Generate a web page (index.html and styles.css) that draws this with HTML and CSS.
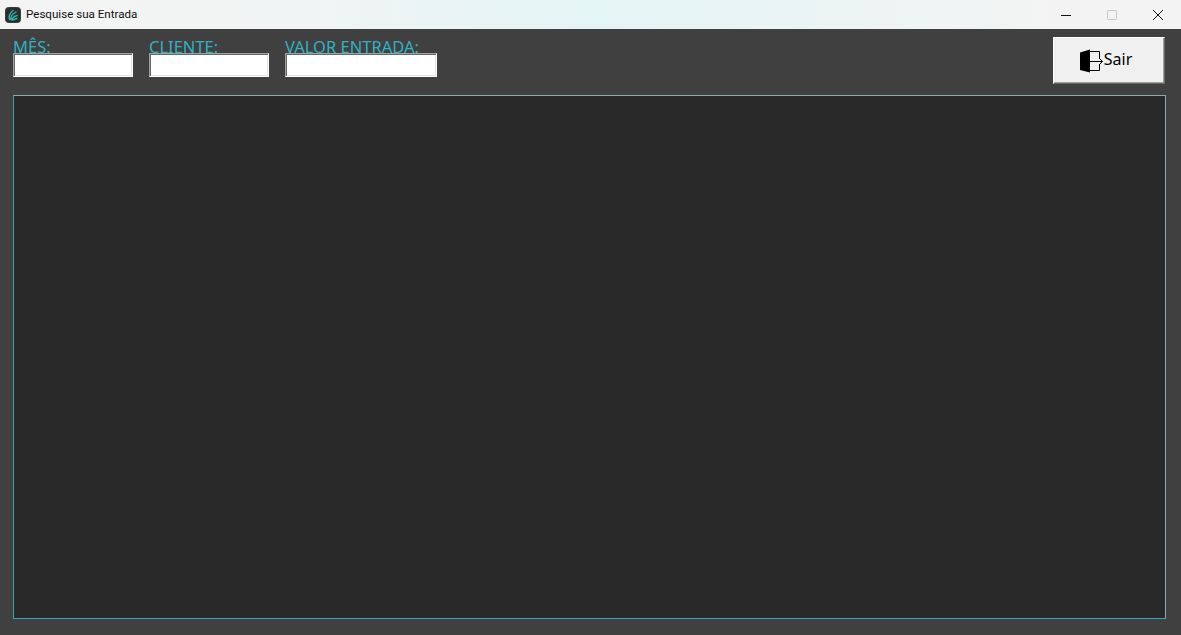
FILE: index.html
```html
<!DOCTYPE html>
<html lang="pt-BR">
<head>
<meta charset="utf-8">
<title>Pesquise sua Entrada</title>
<link rel="stylesheet" href="styles.css">
</head>
<body>
<div class="window">
  <header class="titlebar">
    <div class="title-left">
      <svg class="app-icon" width="16" height="16" viewBox="0 0 16 16">
        <rect x="0.5" y="0.5" width="15" height="15" rx="3" fill="#26302f" stroke="#3a3a3a"/>
        <path d="M4.500 12.500C3.500 9.500 5 6 8 3.500M5.500 12.500C5.500 10 7.500 7 11 5M6.500 12.500C7.500 11 9.500 9 12 8.500M7.500 13C9 12.500 10.500 12 12 11.500" fill="none" stroke="#2fb5b0" stroke-width="1.4" stroke-linecap="round"/>
      </svg>
      <span class="title-text">Pesquise sua Entrada</span>
    </div>
    <div class="win-controls">
      <span class="win-btn"><svg width="12" height="12" viewBox="0 0 12 12"><path d="M1 6.500h10" stroke="#111" stroke-width="1"/></svg></span>
      <span class="win-btn"><svg width="12" height="12" viewBox="0 0 12 12"><rect x="1.500" y="1.500" width="9" height="9" rx="1" fill="none" stroke="#c4c4c4"/></svg></span>
      <span class="win-btn"><svg width="12" height="12" viewBox="0 0 12 12"><path d="M1 1l10 10M11 1L1 11" stroke="#111" stroke-width="1"/></svg></span>
    </div>
  </header>
  <main class="content">
    <div class="toolbar">
      <div class="fields">
        <label class="field field-sm"><span class="field-label">MÊS:</span><input class="field-input" type="text"></label>
        <label class="field field-sm"><span class="field-label">CLIENTE:</span><input class="field-input" type="text"></label>
        <label class="field field-lg"><span class="field-label">VALOR ENTRADA:</span><input class="field-input" type="text"></label>
      </div>
      <button class="exit-btn" type="button">
        <svg class="exit-icon" width="24" height="24" viewBox="0 0 24 24">
          <path d="M0 3.500L10 0.500v23L0 21z" fill="#000"/>
          <path d="M10 2.500h9.500v6.500M19.500 15.500v6H10M10 12.500h12.500M19 9l3.500 3.500L19 16" fill="none" stroke="#000" stroke-width="1"/>
        </svg>
        <span class="exit-text">Sair</span>
      </button>
    </div>
    <section class="panel"></section>
  </main>
</div>
</body>
</html>
```
FILE: styles.css
```css
* { box-sizing: border-box; }
html, body { margin: 0; height: 100%; overflow: hidden; }
body { font-family: "Open Sans", "Noto Sans", sans-serif; background: #404040; }
.window { width: 1181px; height: 635px; display: flex; flex-direction: column; }
.titlebar {
  height: 29px;
  flex: none;
  display: flex;
  justify-content: space-between;
  align-items: center;
  padding-left: 5px;
  background: linear-gradient(90deg, #f3f3f3 0%, #f1f4f4 25%, #e4f5f5 50%, #eef4f4 75%, #f3f3f3 90%);
}
.title-left { display: flex; align-items: center; gap: 5px; }
.app-icon { display: block; }
.title-text { font-family: Roboto, sans-serif; font-size: 11.6px; color: #111; line-height: 16px; margin-bottom: 1px; }
.win-controls { display: flex; }
.win-btn { width: 46px; height: 29px; display: flex; align-items: center; justify-content: center; }
.content { flex: 1; padding: 8px 15px 16px 13px; display: flex; flex-direction: column; }
.toolbar { height: 58px; display: flex; justify-content: space-between; align-items: flex-start; flex: none; }
.fields { display: flex; gap: 16px; padding-top: 2px; }
.field { display: block; }
.field-sm { width: 120px; }
.field-lg { width: 152px; }
.field-label {
  display: block;
  height: 14px;
  font-family: "Noto Sans", sans-serif;
  font-size: 16.5px;
  line-height: 15px;
  color: #30b2c0;
  white-space: nowrap;
}
.field-input {
  display: block;
  width: 100%;
  height: 24px;
  margin: 0;
  position: relative;
  background: #fff;
  border: 1px solid;
  border-color: #a0a0a0 #fff #fff #a0a0a0;
  box-shadow: inset 1px 1px 0 #696969, inset -1px -1px 0 #e3e3e3;
  outline: none;
}
.exit-btn {
  width: 112px;
  height: 47px;
  padding: 0 6px 0 0;
  margin: 0 1px 0 0;
  display: flex;
  align-items: center;
  justify-content: center;
  gap: 0;
  background: #f0f0f0;
  border: 1px solid;
  border-color: #fff #696969 #696969 #fff;
  box-shadow: inset -1px -1px 0 #a0a0a0;
}
.exit-icon { display: block; }
.exit-text { font-family: "Noto Sans", sans-serif; font-size: 16px; color: #000; line-height: 20px; margin-bottom: 3px; }
.panel { height: 524px; background: #292929; border: 1px solid #2fa9b5; border-top-color: #8aa; border-right-color: #8ab; }
```
